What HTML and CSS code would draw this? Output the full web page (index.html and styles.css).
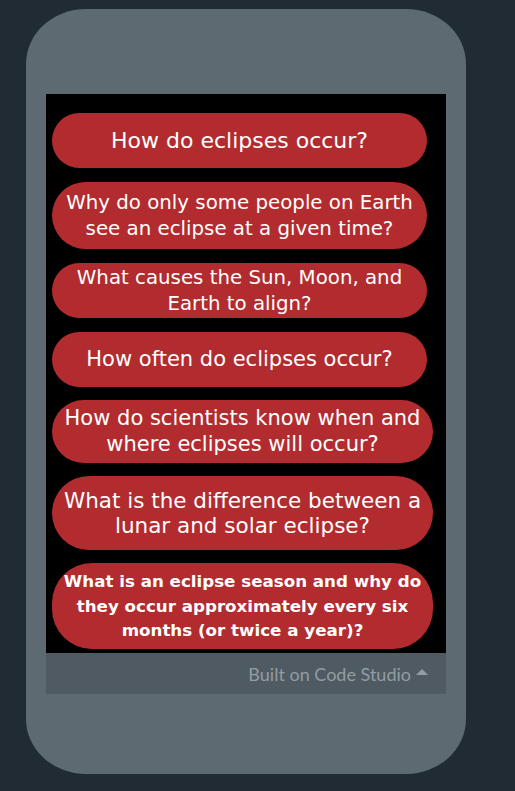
FILE: index.html
```html
<!DOCTYPE html>
<html>
<head>
<meta charset="utf-8">
<link rel="stylesheet" href="styles.css">
</head>
<body>
<div class="phone">
  <div class="screen">
    <div class="app">
      <div class="q q1 narrow">How do eclipses occur?</div>
      <div class="q q2 narrow">Why do only some people on Earth<br>see an eclipse at a given time?</div>
      <div class="q q3 narrow">What causes the Sun, Moon, and<br>Earth to align?</div>
      <div class="q q4 narrow">How often do eclipses occur?</div>
      <div class="q q5 wide tight">How do scientists know when and<br>where eclipses will occur?</div>
      <div class="q q6 wide tight">What is the difference between a<br>lunar and solar eclipse?</div>
      <div class="q q7 wide tight small">What is an eclipse season and why do<br>they occur approximately every six<br>months (or twice a year)?</div>
    </div>
    <div class="footer">
      <span class="built">Built on Code Studio</span>
      <span class="caret"></span>
    </div>
  </div>
</div>
</body>
</html>
```

FILE: styles.css
```css
html, body {
  margin: 0;
  padding: 0;
}
body {
  background: #212b33;
  width: 515px;
  height: 791px;
  overflow: hidden;
}
.phone {
  margin: 9px 0 0 26px;
  width: 440px;
  height: 765px;
  background: #5e6a72;
  border-radius: 60px / 55px;
  padding-top: 85px;
  box-sizing: border-box;
}
.screen {
  margin-left: 20px;
  width: 400px;
}
.app {
  background: #000;
  height: 559px;
  box-sizing: border-box;
  padding: 19px 0 0 6px;
  display: flex;
  flex-direction: column;
  align-items: flex-start;
}
.q {
  background: #b22c2f;
  color: #fff;
  font-family: "DejaVu Sans", Verdana, sans-serif;
  font-size: 21px;
  line-height: 25.5px;
  text-align: center;
  white-space: nowrap;
  border-radius: 40px;
  display: flex;
  align-items: center;
  justify-content: center;
  box-sizing: border-box;
  flex-shrink: 0;
}
.q + .q { margin-top: 14px; }
.q.tight { margin-top: 13px; }
.narrow { width: 375px; }
.wide { width: 381px; }
.q1 { height: 55px; font-size: 22px; }
.q2 { height: 67px; font-size: 19.8px; }
.q3 { height: 55px; font-size: 19.8px; }
.q4 { height: 55px; }
.q5 { height: 63px; }
.q6 { height: 74px; font-size: 21.5px; }
.q7 { height: 86px; }
.small {
  font-size: 16.7px;
  font-weight: bold;
  line-height: 24.5px;
}
.footer {
  background: #4f5a62;
  height: 41px;
  display: flex;
  align-items: center;
  justify-content: flex-end;
  padding-right: 18px;
  gap: 5px;
}
.built {
  font-family: Lato, "Noto Sans", sans-serif;
  font-size: 18px;
  color: #939ca3;
  line-height: 20px;
}
.caret {
  width: 0;
  height: 0;
  border-left: 6px solid transparent;
  border-right: 6px solid transparent;
  border-bottom: 6px solid #939ca3;
  margin-top: -4px;
}
```
